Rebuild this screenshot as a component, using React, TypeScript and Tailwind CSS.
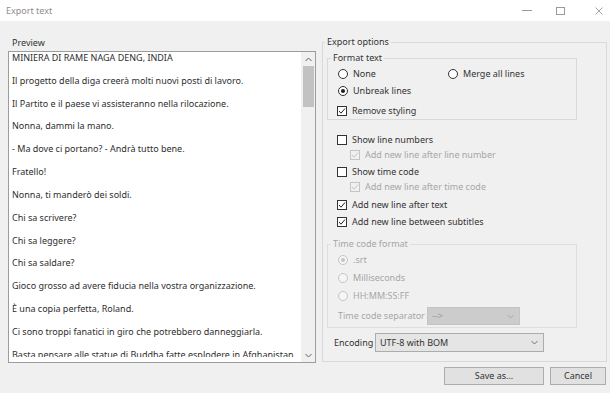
import React from "react";

const Radio = ({ checked = false, disabled = false }: { checked?: boolean; disabled?: boolean }) => (
  <span
    className={
      disabled
        ? "flex items-center justify-center w-[10px] h-[10px] rounded-full border border-[#c4c4c4] bg-[#f6f6f6] shrink-0"
        : "flex items-center justify-center w-[10px] h-[10px] rounded-full border border-[#333333] bg-white shrink-0"
    }
  >
    {checked && (
      <span className={disabled ? "w-[4px] h-[4px] rounded-full bg-[#c4c4c4]" : "w-[4px] h-[4px] rounded-full bg-[#1e1e1e]"} />
    )}
  </span>
);

const Check = ({ checked = false, disabled = false }: { checked?: boolean; disabled?: boolean }) => (
  <span
    className={
      disabled
        ? "flex items-center justify-center w-[10px] h-[10px] border border-[#c4c4c4] bg-[#f0f0f0] shrink-0"
        : "flex items-center justify-center w-[10px] h-[10px] border border-[#333333] bg-white shrink-0"
    }
  >
    {checked && (
      <svg width="8" height="8" viewBox="0 0 8 8">
        <polyline
          points="1,4 3,6.2 7,1.5"
          fill="none"
          stroke={disabled ? "#c4c4c4" : "#222222"}
          strokeWidth="1"
        />
      </svg>
    )}
  </span>
);

const Chevron = ({ color }: { color: string }) => (
  <svg width="7" height="5" viewBox="0 0 7 5">
    <polyline points="0.5,1 3.5,4 6.5,1" fill="none" stroke={color} strokeWidth="1" />
  </svg>
);

const lines = [
  "MINIERA DI RAME NAGA DENG, INDIA",
  "Il progetto della diga creerà molti nuovi posti di lavoro.",
  "Il Partito e il paese vi assisteranno nella rilocazione.",
  "Nonna, dammi la mano.",
  "- Ma dove ci portano? - Andrà tutto bene.",
  "Fratello!",
  "Nonna, ti manderò dei soldi.",
  "Chi sa scrivere?",
  "Chi sa leggere?",
  "Chi sa saldare?",
  "Gioco grosso ad avere fiducia nella vostra organizzazione.",
  "È una copia perfetta, Roland.",
  "Ci sono troppi fanatici in giro che potrebbero danneggiarla.",
  "Basta pensare alle statue di Buddha fatte esplodere in Afghanistan.",
];

export default function App() {
  return (
    <div className="w-[610px] h-[393px] bg-[#f0f0f0] flex flex-col font-['Noto_Sans',sans-serif] text-[9px] text-[#333333] overflow-hidden">
      {/* Title bar */}
      <div className="h-[21px] bg-white flex items-center pl-[6px] shrink-0">
        <span className="text-[#8e8e8e] text-[9px]">Export text</span>
        <div className="ml-auto flex items-center pr-[7px]">
          <span className="w-[10px] h-[1px] bg-[#9a9a9a]" />
          <span className="ml-[24px] w-[9px] h-[8px] border border-[#9a9a9a]" />
          <svg className="ml-[30px]" width="8" height="8" viewBox="0 0 8 8">
            <path d="M0.5 0.5 L7.5 7.5 M7.5 0.5 L0.5 7.5" stroke="#9a9a9a" strokeWidth="0.9" />
          </svg>
        </div>
      </div>

      {/* Body */}
      <div className="flex flex-col pt-[15px]">
        <div className="flex items-start">
          {/* Preview */}
          <div className="ml-[8px] w-[308px] flex flex-col mt-[1px]">
            <div className="pl-[4px] leading-[12px] h-[12px]">Preview</div>
            <div className="mt-[2px] h-[312px] border border-[#9c9c9c] bg-white flex overflow-hidden">
              <div className="flex-1 pl-[3px] h-[305px] overflow-hidden text-[#2e2e2e]">
                {lines.map((l, i) => (
                  <div key={i} className="h-[22.83px] leading-[11.4px] whitespace-nowrap">
                    {l}
                  </div>
                ))}
              </div>
              <div className="w-[14px] bg-[#f0f0f0] flex flex-col items-center shrink-0">
                <div className="h-[14px] flex items-center justify-center">
                  <svg width="7" height="5" viewBox="0 0 7 5">
                    <polyline points="0.5,4 3.5,1 6.5,4" fill="none" stroke="#606060" strokeWidth="1" />
                  </svg>
                </div>
                <div className="w-[11px] h-[41px] bg-[#c2c2c2]" />
                <div className="flex-1" />
                <div className="h-[14px] flex items-center justify-center">
                  <Chevron color="#606060" />
                </div>
              </div>
            </div>
          </div>

          {/* Export options */}
          <fieldset className="ml-[6px] w-[285px] border border-[#d9d9d9] flex flex-col">
            <legend className="ml-[2px] px-[2px] leading-[12px]">Export options</legend>
            <div className="flex flex-col pb-[9px]">
              {/* Format text */}
              <fieldset className="ml-[4px] w-[250px] mt-[4px] border border-[#d9d9d9]">
                <legend className="ml-[3px] px-[2px] leading-[12px]">Format text</legend>
                <div className="flex flex-col pt-[3px] pb-[1px] pl-[10px]">
                  <div className="flex items-center h-[14px]">
                    <div className="flex items-center gap-[5px] w-[110px]">
                      <Radio />
                      <span>None</span>
                    </div>
                    <div className="flex items-center gap-[5px]">
                      <Radio />
                      <span>Merge all lines</span>
                    </div>
                  </div>
                  <div className="flex items-center h-[14px] mt-[3px] gap-[5px]">
                    <Radio checked />
                    <span>Unbreak lines</span>
                  </div>
                  <div className="flex items-center h-[14px] mt-[6px] gap-[5px] -ml-[1px]">
                    <Check checked />
                    <span>Remove styling</span>
                  </div>
                </div>
              </fieldset>

              {/* Checkboxes */}
              <div className="flex flex-col mt-[13px]">
                <div className="flex items-center h-[14px] pl-[14px] gap-[5px]">
                  <Check />
                  <span>Show line numbers</span>
                </div>
                <div className="flex items-center h-[14px] mt-[1px] pl-[27px] gap-[5px] text-[#a6a6a6]">
                  <Check checked disabled />
                  <span>Add new line after line number</span>
                </div>
                <div className="flex items-center h-[14px] mt-[3px] pl-[14px] gap-[5px]">
                  <Check />
                  <span>Show time code</span>
                </div>
                <div className="flex items-center h-[14px] mt-[1px] pl-[27px] gap-[5px] text-[#a6a6a6]">
                  <Check checked disabled />
                  <span>Add new line after time code</span>
                </div>
                <div className="flex items-center h-[14px] mt-[4px] pl-[14px] gap-[5px]">
                  <Check checked />
                  <span>Add new line after text</span>
                </div>
                <div className="flex items-center h-[14px] mt-[3px] pl-[14px] gap-[5px]">
                  <Check checked />
                  <span>Add new line between subtitles</span>
                </div>
              </div>

              {/* Time code format */}
              <fieldset className="ml-[4px] w-[250px] mt-[9px] border border-[#dedede] text-[#a6a6a6]">
                <legend className="ml-[3px] px-[2px] leading-[12px]">Time code format</legend>
                <div className="flex flex-col pt-[3px] pb-[2px] pl-[10px]">
                  <div className="flex items-center h-[14px] gap-[5px]">
                    <Radio checked disabled />
                    <span>.srt</span>
                  </div>
                  <div className="flex items-center h-[14px] mt-[4px] gap-[5px]">
                    <Radio disabled />
                    <span>Milliseconds</span>
                  </div>
                  <div className="flex items-center h-[14px] mt-[4px] gap-[5px]">
                    <Radio disabled />
                    <span>HH:MM:SS:FF</span>
                  </div>
                  <div className="flex items-center h-[18px] mt-[4px]">
                    <span className="w-[89px]">Time code separator</span>
                    <div className="w-[93px] h-[18px] bg-[#cccccc] border border-[#c4c4c4] flex items-center pl-[4px] pr-[5px]">
                      <span className="text-[#9a9a9a]">--&gt;</span>
                      <span className="ml-auto flex">
                        <Chevron color="#a8a8a8" />
                      </span>
                    </div>
                  </div>
                </div>
              </fieldset>

              {/* Encoding */}
              <div className="flex items-center h-[19px] mt-[5px] pl-[11px]">
                <span className="w-[41px]">Encoding</span>
                <div className="w-[169px] h-[19px] bg-[#e5e5e5] border border-[#acacac] flex items-center pl-[4px] pr-[5px]">
                  <span>UTF-8 with BOM</span>
                  <span className="ml-auto flex">
                    <Chevron color="#707070" />
                  </span>
                </div>
              </div>
            </div>
          </fieldset>
        </div>

        {/* Buttons */}
        <div className="flex justify-end mt-[4px] pr-[4px]">
          <button className="w-[100px] h-[18px] bg-[#e1e1e1] border border-[#adadad] flex items-center justify-center">
            Save as...
          </button>
          <button className="ml-[6px] w-[56px] h-[18px] bg-[#e1e1e1] border border-[#adadad] flex items-center justify-center">
            Cancel
          </button>
        </div>
      </div>
    </div>
  );
}
